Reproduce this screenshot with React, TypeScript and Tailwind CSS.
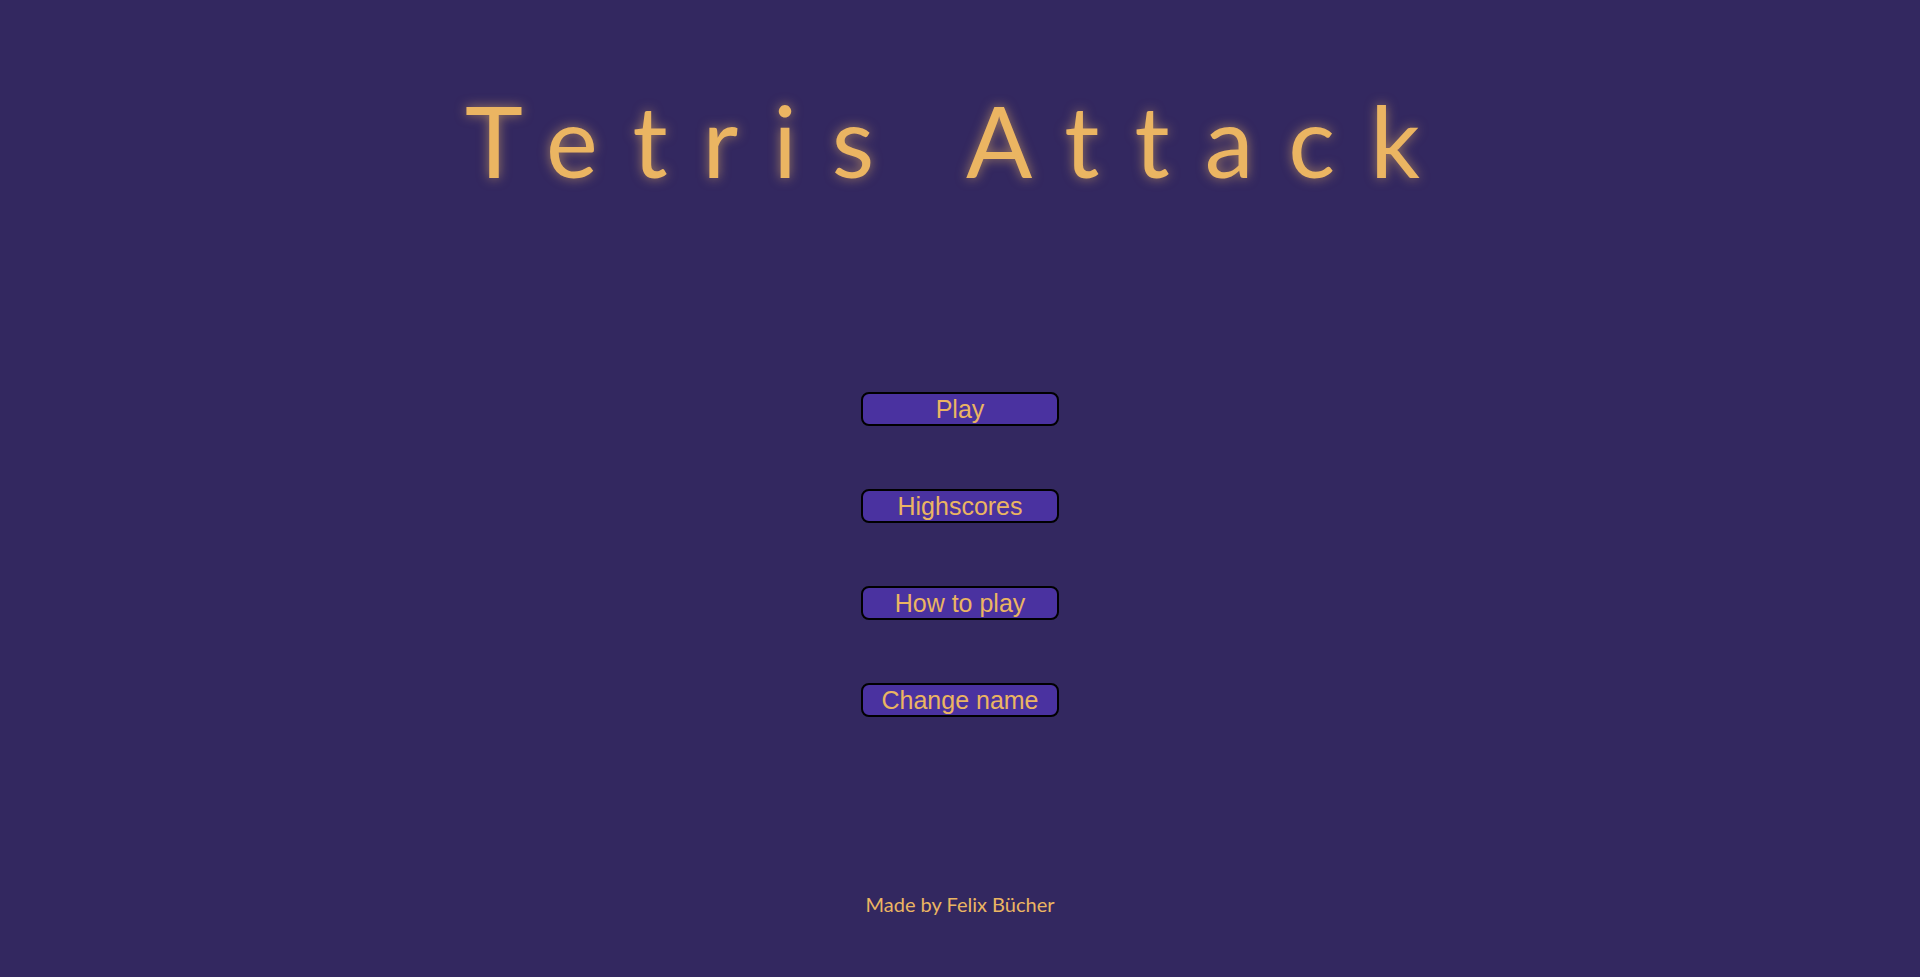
import React from 'react';

const menuItems = ['Play', 'Highscores', 'How to play', 'Change name'];

export default function App() {
  return (
    <div className="min-h-screen w-full bg-[#332860] flex flex-col items-center font-['Lato',sans-serif] text-[#ebb562]">
      {/* Title */}
      <h1 className="mt-[88px] h-[104px] text-[98px] leading-[104px] tracking-[35px] [text-shadow:0_0_12px_rgba(235,181,98,0.6)]">
        Tetris Attack
      </h1>

      {/* Menu */}
      <div className="mt-[200px] flex flex-col gap-[63px]">
        {menuItems.map((label) => (
          <button
            key={label}
            className="w-[198px] h-[34px] rounded-[8px] border-2 border-black bg-[#4a32a0] text-[25px] leading-none text-[#ebb562] font-['Liberation_Sans',Arial,sans-serif] flex items-center justify-center"
          >
            {label}
          </button>
        ))}
      </div>

      {/* Footer */}
      <p className="mt-[175px] text-[20px] leading-6">Made by Felix Bücher</p>
    </div>
  );
}
